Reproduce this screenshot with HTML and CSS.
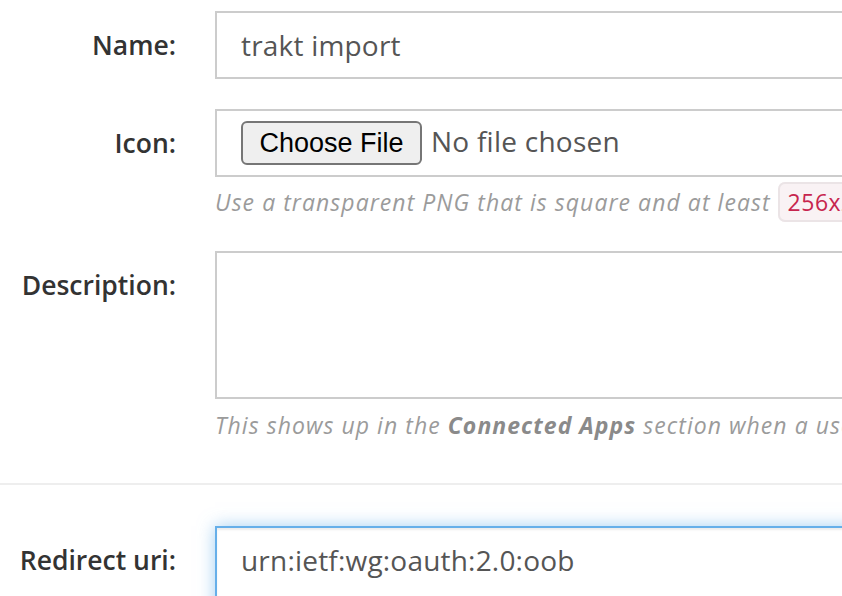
FILE: index.html
```html
<!DOCTYPE html>
<html>
<head>
<meta charset="utf-8">
<link rel="stylesheet" href="styles.css">
</head>
<body>
<form class="form">
  <div class="row">
    <label class="label" for="name">Name:</label>
    <div class="field">
      <input class="control" id="name" type="text" value="trakt import">
    </div>
  </div>
  <div class="row">
    <label class="label" for="icon">Icon:</label>
    <div class="field">
      <div class="control file-control">
        <input class="file" id="icon" type="file">
      </div>
      <p class="help">Use a transparent PNG that is square and at least <code class="code">256x256</code> pixels.</p>
    </div>
  </div>
  <div class="row">
    <label class="label" for="desc">Description:</label>
    <div class="field">
      <textarea class="control area" id="desc"></textarea>
      <p class="help help-2">This shows up in the <b>Connected Apps</b> section when a user authorizes your app.</p>
    </div>
  </div>
  <hr class="divider">
  <div class="row">
    <label class="label" for="redirect">Redirect uri:</label>
    <div class="field">
      <input class="control focus redirect" id="redirect" type="text" value="urn:ietf:wg:oauth:2.0:oob">
    </div>
  </div>
</form>
</body>
</html>
```
FILE: styles.css
```css
html, body {
  margin: 0;
  padding: 0;
  overflow: hidden;
  background: #fff;
}
body {
  width: 842px;
  height: 596px;
  font-family: "Open Sans", "DejaVu Sans", sans-serif;
}
.form {
  width: 1300px;
  padding-top: 11px;
}
.row {
  display: grid;
  grid-template-columns: 176px 1000px;
  column-gap: 39px;
  margin-bottom: 30px;
}
.label {
  text-align: right;
  font-weight: 600;
  font-size: 26.5px;
  color: #333;
  line-height: 68px;
  height: 68px;
}
.field {
  display: flex;
  flex-direction: column;
}
.control {
  box-sizing: border-box;
  width: 100%;
  height: 68px;
  border: 2px solid #ccc;
  padding: 0 24px;
  font-family: "Open Sans", "DejaVu Sans", sans-serif;
  font-size: 28px;
  letter-spacing: 0.2px;
  color: #555;
  background: #fff;
  outline: none;
  margin: 0;
  border-radius: 0;
}
.file-control {
  display: flex;
  align-items: center;
}
.file {
  font-family: "Open Sans", "DejaVu Sans", sans-serif;
  font-size: 28px;
  letter-spacing: 0.25px;
  color: #555;
}
.file::file-selector-button {
  font-family: "Liberation Sans", Arial, sans-serif;
  font-size: 27px;
  letter-spacing: 0;
  color: #000;
  background: #efefef;
  border: 2px solid #767676;
  border-radius: 6px;
  height: 44px;
  width: 181px;
  margin-right: 9px;
  padding: 0;
}
.help {
  margin: 6px 0 0;
  font-size: 23px;
  letter-spacing: 1.05px;
  line-height: 38px;
  font-style: italic;
  color: #9b9b9b;
  white-space: nowrap;
}
.help b {
  color: #8a8a8a;
}
.code {
  font-family: "Open Sans", "DejaVu Sans", sans-serif;
  font-style: normal;
  font-size: 23px;
  letter-spacing: 0.5px;
  color: #c7254e;
  background: #f9f2f4;
  border: 2px solid #ebe4e6;
  border-radius: 7px;
  padding: 2px 8px;
}
.area {
  height: 148px;
  resize: none;
}
.help-2 {
  margin-top: 7px;
}
.divider {
  border: 0;
  border-top: 2px solid #eee;
  margin: 39px 0 41px;
}
.focus {
  border-color: #66afe9;
  box-shadow: inset 0 2px 2px rgba(0,0,0,.075), 0 0 16px rgba(102,175,233,.6);
}
.redirect {
  height: 100px;
  padding-bottom: 32px;
}
```
